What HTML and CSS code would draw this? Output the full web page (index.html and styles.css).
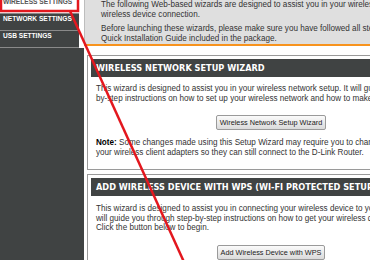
FILE: index.html
```html
<!DOCTYPE html>
<html lang="en">
<head>
    <meta charset="UTF-8">
    <meta name="viewport" content="width=device-width, initial-scale=1.0">
    <title>Setup Wizard</title>
    <link rel="stylesheet" href="styles.css">
</head>
<body>
    <div class="page">
        <div class="sidenav">
            <ul class="menu">
                <li class="active">Wireless Settings</li>
                <li>Network Settings</li>
                <li>USB Settings</li>
            </ul>
        </div>
        <div class="content">
            <div class="intro">
                <p>The following Web-based wizards are designed to assist you in your wireless network setup and<br>wireless device connection.</p>
                <p>Before launching these wizards, please make sure you have followed all steps outlined in the<br>Quick Installation Guide included in the package.</p>
            </div>
            <div class="box">
                <h2>Wireless Network Setup Wizard</h2>
                <p>This wizard is designed to assist you in your wireless network setup. It will guide you through step-<br>by-step instructions on how to set up your wireless network and how to make it secure.</p>
                <div class="actions"><button>Wireless Network Setup Wizard</button></div>
                <p class="note"><strong>Note:</strong> Some changes made using this Setup Wizard may require you to change some settings on<br>your wireless client adapters so they can still connect to the D-Link Router.</p>
            </div>
            <div class="box second">
                <h2>Add Wireless Device with WPS (Wi-Fi Protected Setup)</h2>
                <p>This wizard is designed to assist you in connecting your wireless device to your router. It<br>will guide you through step-by-step instructions on how to get your wireless device connected.<br>Click the button below to begin.</p>
                <div class="actions"><button>Add Wireless Device with WPS</button></div>
            </div>
        </div>
        <svg class="markup" width="370" height="260" viewBox="0 0 370 260">
            <rect x="1" y="-10" width="77" height="21" fill="none" stroke="#e3171e" stroke-width="2.5"/>
            <line x1="70" y1="11" x2="184" y2="262" stroke="#e3171e" stroke-width="2.5"/>
        </svg>
    </div>
</body>
</html>
```

FILE: styles.css
```css
html, body {
    margin: 0;
    height: 100%;
    overflow: hidden;
}

body {
    font-family: "Liberation Sans", Arial, sans-serif;
    background-color: #fff;
    color: #333;
}

.page {
    position: relative;
    display: flex;
    width: 470px;
    min-height: 260px;
}

.sidenav {
    flex: none;
    width: 84px;
    background-color: #404343;
}

.menu {
    list-style: none;
    margin: -3px 0 0;
    padding: 0;
    width: 79px;
    border-right: 5px solid #fff;
}

.menu li {
    font-weight: bold;
    font-size: 6.6px;
    line-height: 10px;
    color: #fff;
    text-transform: uppercase;
    padding: 0 0 6px 3px;
    border-bottom: 1px solid #8a8a8a;
}

.menu li.active {
    background-color: #fff;
    color: #555;
}

.content {
    flex: none;
    width: 380px;
}

.intro {
    background-color: #dfdfdf;
    border-left: 1px solid #bdbdbd;
    border-bottom: 2px solid #f7931e;
    padding-left: 16px;
    font-size: 8.15px;
    line-height: 10px;
    white-space: nowrap;
}

.intro p {
    margin: 0 0 4px;
}

.intro p:last-child {
    margin-bottom: 0;
}

.box {
    width: 360px;
    margin: 9px 0 0 3px;
    padding: 3px 3px 12px;
    border: 1px solid #9a9a9a;
}

.box.second {
    margin-top: 4px;
}

.box h2 {
    margin: 0;
    padding-left: 5px;
    background-color: #404343;
    color: #fff;
    font-family: "DejaVu Sans", Verdana, sans-serif;
    font-size: 8.2px;
    line-height: 18px;
    text-transform: uppercase;
}

.box p {
    margin: 7px 0 0;
    padding-left: 5px;
    font-size: 8.15px;
    line-height: 9.5px;
    white-space: nowrap;
}

.box p.note {
    margin-top: 8px;
}

.box.second p {
    margin-top: 8px;
}

.box strong {
    color: #000;
}

.actions {
    margin-top: 8px;
    text-align: center;
}

button {
    height: 15px;
    padding: 0 3px;
    font-family: "Liberation Sans", Arial, sans-serif;
    font-size: 7.3px;
    color: #222;
    border: 1px solid #9a9a9a;
    border-radius: 2px;
    background: linear-gradient(#fbfbfb, #dadada);
}

.markup {
    position: absolute;
    left: 0;
    top: 0;
    pointer-events: none;
}
```
